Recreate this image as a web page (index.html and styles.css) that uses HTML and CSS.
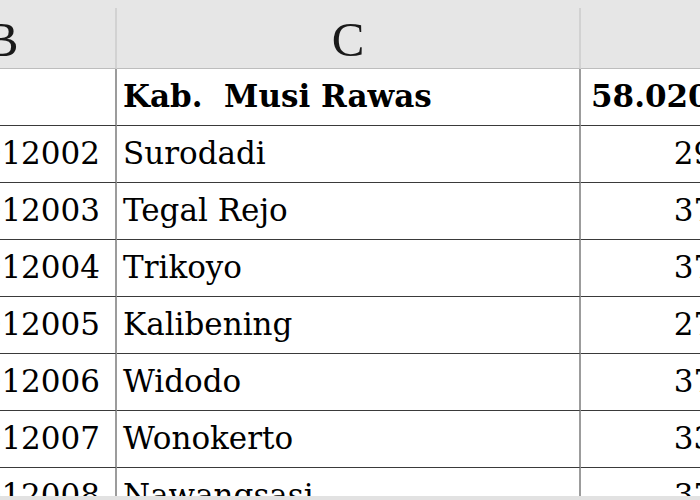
FILE: index.html
```html
<!DOCTYPE html>
<html>
<head>
<meta charset="utf-8">
<link rel="stylesheet" href="styles.css">
</head>
<body>
<div class="viewport">
  <div class="strip"></div>
  <div class="sheet">
    <div class="hd">B</div>
    <div class="hd">C</div>
    <div class="hd"></div>

    <div class="cell num"></div>
    <div class="cell txt bold">Kab.&nbsp; Musi Rawas</div>
    <div class="cell lft bold">58.0200</div>

    <div class="cell num">1605012002</div>
    <div class="cell txt">Surodadi</div>
    <div class="cell num">294</div>

    <div class="cell num">1605012003</div>
    <div class="cell txt">Tegal Rejo</div>
    <div class="cell num">371</div>

    <div class="cell num">1605012004</div>
    <div class="cell txt">Trikoyo</div>
    <div class="cell num">370</div>

    <div class="cell num">1605012005</div>
    <div class="cell txt">Kalibening</div>
    <div class="cell num">276</div>

    <div class="cell num">1605012006</div>
    <div class="cell txt">Widodo</div>
    <div class="cell num">375</div>

    <div class="cell num">1605012007</div>
    <div class="cell txt">Wonokerto</div>
    <div class="cell num">338</div>

    <div class="cell num">1605012008</div>
    <div class="cell txt">Nawangsasi</div>
    <div class="cell num">370</div>
  </div>
</div>
<div class="hscroll"></div>
</body>
</html>
```

FILE: styles.css
```css
html, body {
  margin: 0;
  padding: 0;
  background: #ffffff;
  width: 700px;
  height: 500px;
  overflow: hidden;
}

.viewport {
  height: 496px;
  overflow: hidden;
}

.strip {
  height: 8px;
  background: #e6e6e6;
}

.sheet {
  display: grid;
  grid-template-columns: 228px 464px 169px;
  grid-template-rows: 61px;
  grid-auto-rows: 57px;
  margin-left: -111px;
  width: 861px;
}

.hd {
  background: #e6e6e6;
  border-right: 2px solid #d2d2d2;
  border-bottom: 1px solid #bdbdbd;
  font-family: "Liberation Serif", serif;
  font-size: 49px;
  color: #1a1a1a;
  display: flex;
  align-items: center;
  justify-content: center;
  padding-top: 2px;
  box-sizing: border-box;
}

.cell {
  border-right: 2px solid #9c9c9c;
  border-bottom: 1px solid #3a3a3a;
  font-family: "DejaVu Serif", serif;
  font-size: 31px;
  color: #000;
  display: flex;
  align-items: center;
  white-space: nowrap;
  overflow: hidden;
  box-sizing: border-box;
  padding-bottom: 3px;
}

.num {
  justify-content: flex-end;
  padding-right: 15px;
}

.txt {
  padding-left: 6px;
}

.lft {
  padding-left: 10px;
}

.bold {
  font-weight: bold;
}

.hscroll {
  height: 4px;
  background: #e2e2e2;
}
```
